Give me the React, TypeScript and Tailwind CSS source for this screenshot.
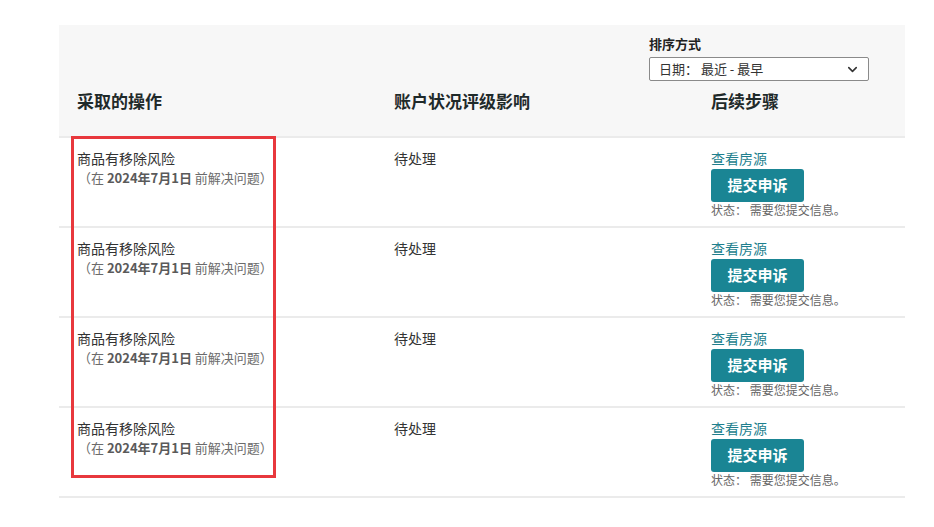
import { ChevronDown } from 'lucide-react';

const rows = [1, 2, 3, 4];

function Row() {
  return (
    <div className="grid grid-cols-[317px_317px_1fr] px-[18px] pt-[10px] h-[90px] border-t-2 border-[#ebebeb]">
      <div className="text-[14px] leading-[20px] text-[#333]">
        <div>商品有移除风险</div>
        <div className="text-[13px] text-[#6b6b6b] pl-[1px]">
          （在 <span className="font-bold text-[#5a5a5a]">2024年7月1日</span> 前解决问题）
        </div>
      </div>
      <div className="text-[14px] leading-[20px] text-[#333]">待处理</div>
      <div className="flex flex-col items-start">
        <a className="text-[14px] leading-[20px] text-[#1e7f8e] cursor-pointer">查看房源</a>
        <button className="mt-[1px] w-[93px] h-[33px] rounded-[3px] bg-[#1a8594] text-white text-[15px] font-bold">
          提交申诉
        </button>
        <div className="text-[12px] leading-[15px] text-[#666]">状态： 需要您提交信息。</div>
      </div>
    </div>
  );
}

export default function App() {
  return (
    <div
      className="min-h-screen bg-white pt-[25px]"
      style={{ fontFamily: '"Noto Sans CJK SC", "Noto Sans", sans-serif' }}
    >
      <div className="relative ml-[59px] w-[846px]">
        <div className="bg-[#f7f7f7] pt-[10px] pb-[23px]">
          <div className="flex justify-end pr-[36px]">
            <div className="w-[220px]">
              <div className="text-[13px] font-bold leading-[18px] text-[#222] mb-[4px]">排序方式</div>
              <div className="h-[24px] border border-[#8a8a8a] rounded-[2px] bg-white flex items-center justify-between pl-[9px] pr-[8px] text-[13px] text-[#333]">
                <span>日期： 最近 - 最早</span>
                <ChevronDown size={15} strokeWidth={2.5} className="text-[#333]" />
              </div>
            </div>
          </div>
          <div className="grid grid-cols-[317px_317px_1fr] px-[18px] mt-[8px] text-[17px] font-bold leading-[24px] text-[#1f2a2a]">
            <div>采取的操作</div>
            <div>账户状况评级影响</div>
            <div>后续步骤</div>
          </div>
        </div>
        {rows.map((r) => (
          <Row key={r} />
        ))}
        <div className="border-t-2 border-[#ebebeb]" />
        <div className="absolute left-[12px] top-[111px] w-[205px] h-[342px] border-[3px] border-[#e8383d] pointer-events-none" />
      </div>
    </div>
  );
}
